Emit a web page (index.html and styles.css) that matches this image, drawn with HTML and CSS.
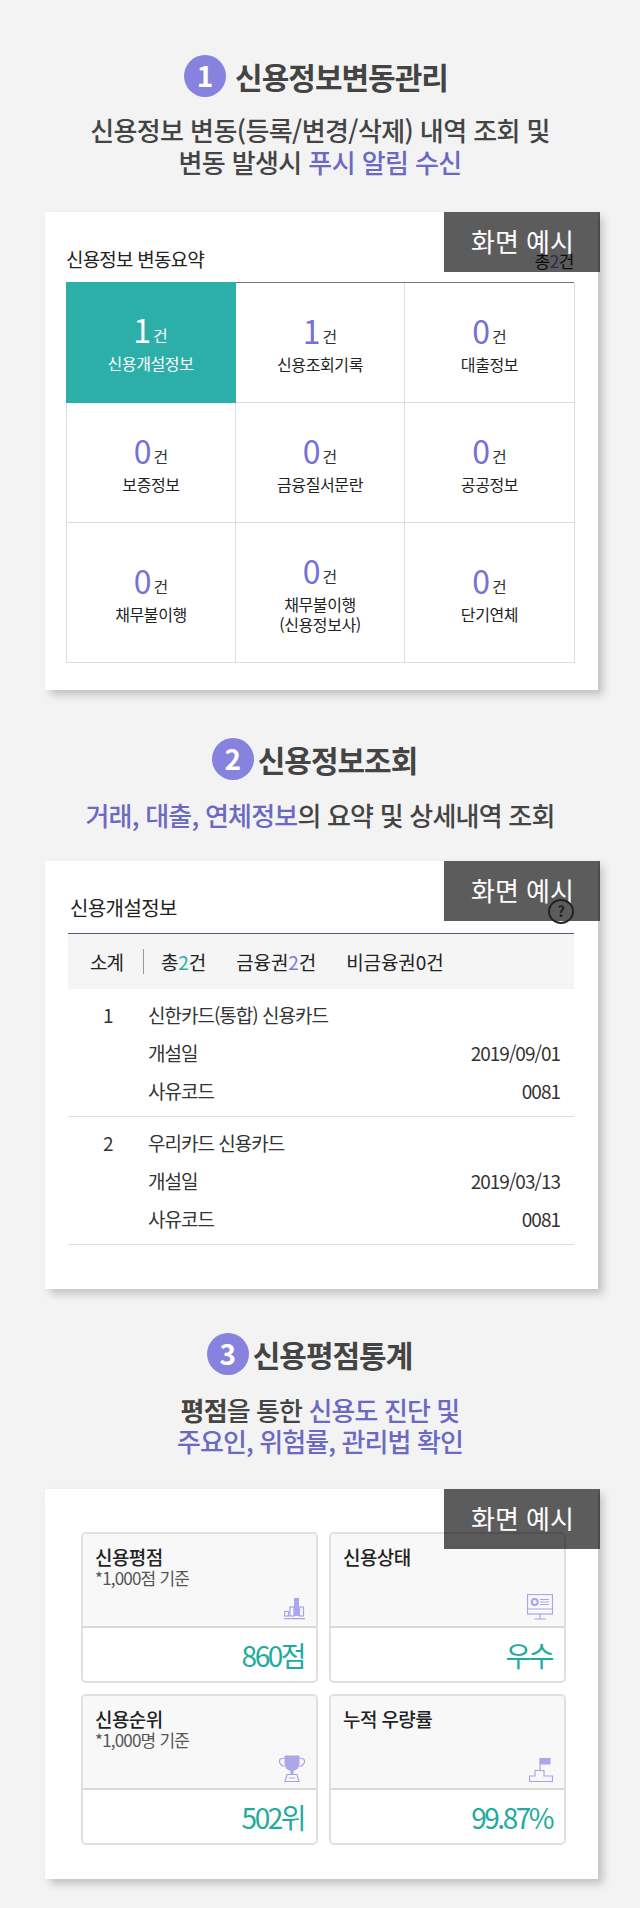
FILE: index.html
```html
<!DOCTYPE html>
<html lang="ko">
<head>
<meta charset="utf-8">
<title>신용정보</title>
<link rel="stylesheet" href="styles.css">
</head>
<body>
<section class="sec sec-1">
  <h2 class="heading gap-10"><span class="step">1</span><span>신용정보변동관리</span></h2>
  <p class="sub">신용정보 변동(등록/변경/삭제) 내역 조회 및<br>변동 발생시 <em>푸시 알림 수신</em></p>
  <div class="card card-a">
    <div class="badge">화면 예시</div>
    <div class="head-a"><span class="head-title">신용정보 변동요약</span><span class="total">총<b>2</b>건</span></div>
    <div class="summary">
      <div class="cell active"><div class="num"><b>1</b>건</div><div class="label">신용개설정보</div></div>
      <div class="cell"><div class="num"><b>1</b>건</div><div class="label">신용조회기록</div></div>
      <div class="cell"><div class="num"><b>0</b>건</div><div class="label">대출정보</div></div>
      <div class="cell"><div class="num"><b>0</b>건</div><div class="label">보증정보</div></div>
      <div class="cell"><div class="num"><b>0</b>건</div><div class="label">금융질서문란</div></div>
      <div class="cell"><div class="num"><b>0</b>건</div><div class="label">공공정보</div></div>
      <div class="cell"><div class="num"><b>0</b>건</div><div class="label">채무불이행</div></div>
      <div class="cell"><div class="num"><b>0</b>건</div><div class="label">채무불이행<br>(신용정보사)</div></div>
      <div class="cell"><div class="num"><b>0</b>건</div><div class="label">단기연체</div></div>
    </div>
  </div>
</section>

<section class="sec sec-2">
  <h2 class="heading gap-4"><span class="step">2</span><span>신용정보조회</span></h2>
  <p class="sub"><em>거래, 대출, 연체정보</em>의 요약 및 상세내역 조회</p>
  <div class="card card-b">
    <div class="badge">화면 예시</div>
    <div class="head-b"><span class="head-title">신용개설정보</span><span class="help">?</span></div>
    <div class="bar">
      <span class="bar-name">소계</span>
      <span class="bar-item">총<b class="teal">2</b>건</span>
      <span class="bar-item">금융권<b class="violet">2</b>건</span>
      <span class="bar-item">비금융권<b>0</b>건</span>
    </div>
    <div class="acct">
      <div class="acct-no">1</div><div class="acct-name">신한카드(통합) 신용카드</div>
      <div class="acct-key">개설일</div><div class="acct-val">2019/09/01</div>
      <div class="acct-key">사유코드</div><div class="acct-val">0081</div>
    </div>
    <div class="acct">
      <div class="acct-no">2</div><div class="acct-name">우리카드 신용카드</div>
      <div class="acct-key">개설일</div><div class="acct-val">2019/03/13</div>
      <div class="acct-key">사유코드</div><div class="acct-val">0081</div>
    </div>
  </div>
</section>

<section class="sec sec-3">
  <h2 class="heading gap-4"><span class="step">3</span><span>신용평점통계</span></h2>
  <p class="sub"><strong>평점</strong>을 통한 <em>신용도 진단 및<br>주요인, 위험률, 관리법 확인</em></p>
  <div class="card card-c">
    <div class="badge">화면 예시</div>
    <div class="stats">
      <div class="stat">
        <div class="stat-top">
          <div class="stat-title">신용평점</div>
          <div class="stat-note">*1,000점 기준</div>
          <svg class="icon icon-bars" viewBox="0 0 21 22" width="21" height="22">
            <rect class="ln" x="0.5" y="13.5" width="4" height="4.5"/>
            <rect class="ln" x="6" y="9" width="4" height="9"/>
            <rect class="fl" x="10" y="0" width="5" height="18"/>
            <rect class="ln" x="15.5" y="9" width="4" height="9"/>
            <path class="ln" d="M0 20.7H21"/>
          </svg>
        </div>
        <div class="stat-val">860점</div>
      </div>
      <div class="stat">
        <div class="stat-top">
          <div class="stat-title">신용상태</div>
          <svg class="icon icon-screen" viewBox="0 0 26 26" width="26" height="26">
            <rect class="ln" x="0.5" y="0.5" width="25" height="19.5"/>
            <path class="ln" d="M0.5 15H25.5M13 20V24.5M7.5 25H19"/>
            <circle class="ln2" cx="7.7" cy="8" r="3"/>
            <path class="ln" d="M13 5.5H22M13 8H22M13 10.5H22"/>
          </svg>
        </div>
        <div class="stat-val">우수</div>
      </div>
      <div class="stat">
        <div class="stat-top">
          <div class="stat-title">신용순위</div>
          <div class="stat-note">*1,000명 기준</div>
          <svg class="icon icon-cup" viewBox="0 0 26 27" width="26" height="27">
            <path class="fl" d="M5.5 0.5H20.5V8Q20.5 15 13 16Q5.5 15 5.5 8Z"/>
            <path class="ln" d="M5.5 3.5H3Q0.5 3.5 0.5 6.5Q0.5 9.5 5.5 11.5M20.5 3.5H23Q25.5 3.5 25.5 6.5Q25.5 9.5 20.5 11.5"/>
            <path class="fl" d="M11.5 15H14.5V19H11.5Z"/>
            <path class="ln" d="M8 19.5H18L20 26.5H6ZM10 23H16"/>
          </svg>
        </div>
        <div class="stat-val">502위</div>
      </div>
      <div class="stat">
        <div class="stat-top">
          <div class="stat-title">누적 우량률</div>
          <svg class="icon icon-flag" viewBox="0 0 24 24" width="24" height="24">
            <rect class="fl" x="11" y="0" width="10.5" height="6.5"/>
            <path class="ln" d="M11 0V12.5M6 12.5H15V18H23.5V23.5H0.5V18H6Z"/>
          </svg>
        </div>
        <div class="stat-val">99.87%</div>
      </div>
    </div>
  </div>
</section>
</body>
</html>
```
FILE: styles.css
```css
* { box-sizing: border-box; }
html, body { margin: 0; padding: 0; }
body {
  width: 640px;
  height: 1908px;
  overflow: hidden;
  background: #f3f3f3;
  font-family: "Noto Sans CJK KR", "Noto Sans", sans-serif;
  color: #333;
}
.sec-1 { padding-top: 55px; }
.sec-2 { padding-top: 48px; }
.sec-3 { padding-top: 44px; }

.heading {
  margin: 0;
  height: 42px;
  padding-right: 8px;
  display: flex;
  justify-content: center;
  align-items: center;
  font-size: 30px;
  font-weight: 700;
  letter-spacing: -1px;
  color: #444;
  line-height: 42px;
}
.sec-2 .heading { padding-right: 11px; }
.sec-3 .heading { padding-right: 21px; }
.gap-10 { gap: 9px; }
.gap-4 { gap: 4px; }
.step {
  width: 42px;
  height: 42px;
  border-radius: 50%;
  background: #8682dd;
  color: #fff;
  font-size: 28px;
  font-weight: 700;
  letter-spacing: 0;
  text-align: center;
  line-height: 41px;
}
.sub {
  margin: 19px 0 0;
  text-align: center;
  font-size: 26px;
  font-weight: 500;
  line-height: 32px;
  letter-spacing: -0.6px;
  color: #444;
}
.sec-1 .sub { margin-top: 17px; }
.sec-2 .sub { letter-spacing: -0.8px; }
.sec-3 .sub { letter-spacing: -0.9px; line-height: 31px; }
.sub em { font-style: normal; color: #6d69c3; }
.sub strong { font-weight: 700; color: #444; }

.card {
  position: relative;
  margin: 34px 0 0 45px;
  width: 553px;
  background: #fff;
  box-shadow: 5px 5px 8px rgba(0, 0, 0, 0.2);
}
.sec-2 .card { margin-top: 30px; }
.sec-3 .card { margin-top: 33px; }
.badge {
  position: absolute;
  top: 0;
  right: -2px;
  width: 156px;
  height: 60px;
  background: rgba(0, 0, 0, 0.64);
  color: #fff;
  font-size: 26px;
  line-height: 58px;
  padding-left: 27px;
  z-index: 2;
}

.card-a { padding: 0 24px 27px 21px; }
.head-a {
  height: 70px;
  display: flex;
  justify-content: space-between;
  align-items: flex-end;
}
.head-title {
  font-size: 19px;
  line-height: 20px;
  letter-spacing: -0.8px;
  color: #222;
  padding-bottom: 13px;
}
.total {
  font-size: 17px;
  line-height: 20px;
  letter-spacing: -0.4px;
  color: #222;
  padding-bottom: 11px;
}
.total b { font-weight: 400; color: #7d78db; }

.summary {
  display: grid;
  grid-template-columns: 169px 169px 170px;
  grid-template-rows: 120px 120px 140px;
  border-top: 1px solid #777;
  border-left: 1px solid #ddd;
}
.cell {
  border-right: 1px solid #ddd;
  border-bottom: 1px solid #ddd;
  display: flex;
  flex-direction: column;
  align-items: center;
  justify-content: center;
  gap: 6px;
  text-align: center;
}
.num {
  height: 36px;
  line-height: 36px;
  font-size: 16px;
  color: #333;
}
.num b {
  font-size: 32px;
  font-weight: 400;
  color: #7670d8;
  margin-right: 2px;
  vertical-align: -1px;
  line-height: 36px;
}
.label {
  font-size: 16px;
  line-height: 20px;
  letter-spacing: -0.4px;
  color: #222;
}
.cell.active {
  background: #2cafa8;
  border-color: #2cafa8;
  margin: -1px 0 0 -1px;
}
.cell.active .num,
.cell.active .num b,
.cell.active .label { color: #fff; }

.card-b { padding: 0 24px 44px 23px; }
.head-b {
  height: 72px;
  position: relative;
  display: flex;
  justify-content: space-between;
  align-items: flex-end;
}
.head-b .head-title {
  font-size: 20px;
  letter-spacing: -0.6px;
  padding: 0 0 15px 2px;
}
.help {
  position: relative;
  z-index: 3;
  width: 26px;
  height: 25px;
  margin-bottom: 9px;
  border: 2px solid #222;
  border-radius: 50%;
  font-size: 15px;
  font-weight: 700;
  line-height: 20px;
  text-align: center;
  color: #222;
}
.bar {
  height: 56px;
  background: #f5f5f5;
  border-top: 1px solid #5a5780;
  display: flex;
  align-items: center;
  padding-left: 22px;
  font-size: 19px;
  letter-spacing: -0.1px;
  color: #222;
}
.bar b { font-weight: 400; }
.bar-name {
  position: relative;
  padding-right: 20px;
  margin-right: 17px;
  border-right: 1px solid #999;
  line-height: 25px;
  letter-spacing: -1px;
}
.bar-item { margin-right: 30px; }
.teal { color: #1fb0a2; }
.violet { color: #7d78db; }
.acct {
  display: grid;
  grid-template-columns: 80px 1fr auto;
  grid-auto-rows: 38px;
  align-items: center;
  padding: 6px 14px 7px 0;
  border-bottom: 1px solid #ddd;
  font-size: 19px;
  letter-spacing: -1px;
  color: #333;
}
.acct-no { grid-column: 1; padding-left: 35px; }
.acct-name { grid-column: 2 / 4; }
.acct-key { grid-column: 2; }
.acct-val { grid-column: 3; text-align: right; }

.card-c { padding: 43px 32px 34px 36px; }
.stats {
  display: grid;
  grid-template-columns: 237px 237px;
  grid-auto-rows: 151px;
  gap: 11px;
}
.stat {
  border: 2px solid #e0e0e0;
  border-radius: 5px;
  display: flex;
  flex-direction: column;
  overflow: hidden;
}
.stat-top {
  height: 94px;
  flex: none;
  background: #f8f8f8;
  border-bottom: 2px solid #d9d9d9;
  display: flex;
  flex-direction: column;
  padding: 12px 11px 6px 12px;
}
.stat-title {
  font-size: 19px;
  font-weight: 500;
  line-height: 22px;
  letter-spacing: -0.6px;
  color: #222;
}
.stat-note {
  font-size: 17px;
  line-height: 20px;
  letter-spacing: -0.8px;
  color: #555;
}
.icon { margin-top: auto; align-self: flex-end; flex: none; }
.ln, .ln2 { fill: none; stroke: #a8a3ea; stroke-width: 1.2; }
.ln2 { stroke-width: 2; }
.fl { fill: #aca7e8; }
.stat-val {
  flex: 1;
  display: flex;
  align-items: center;
  justify-content: flex-end;
  padding-right: 12px;
  font-size: 28px;
  letter-spacing: -2.5px;
  color: #1fab9e;
}
```
